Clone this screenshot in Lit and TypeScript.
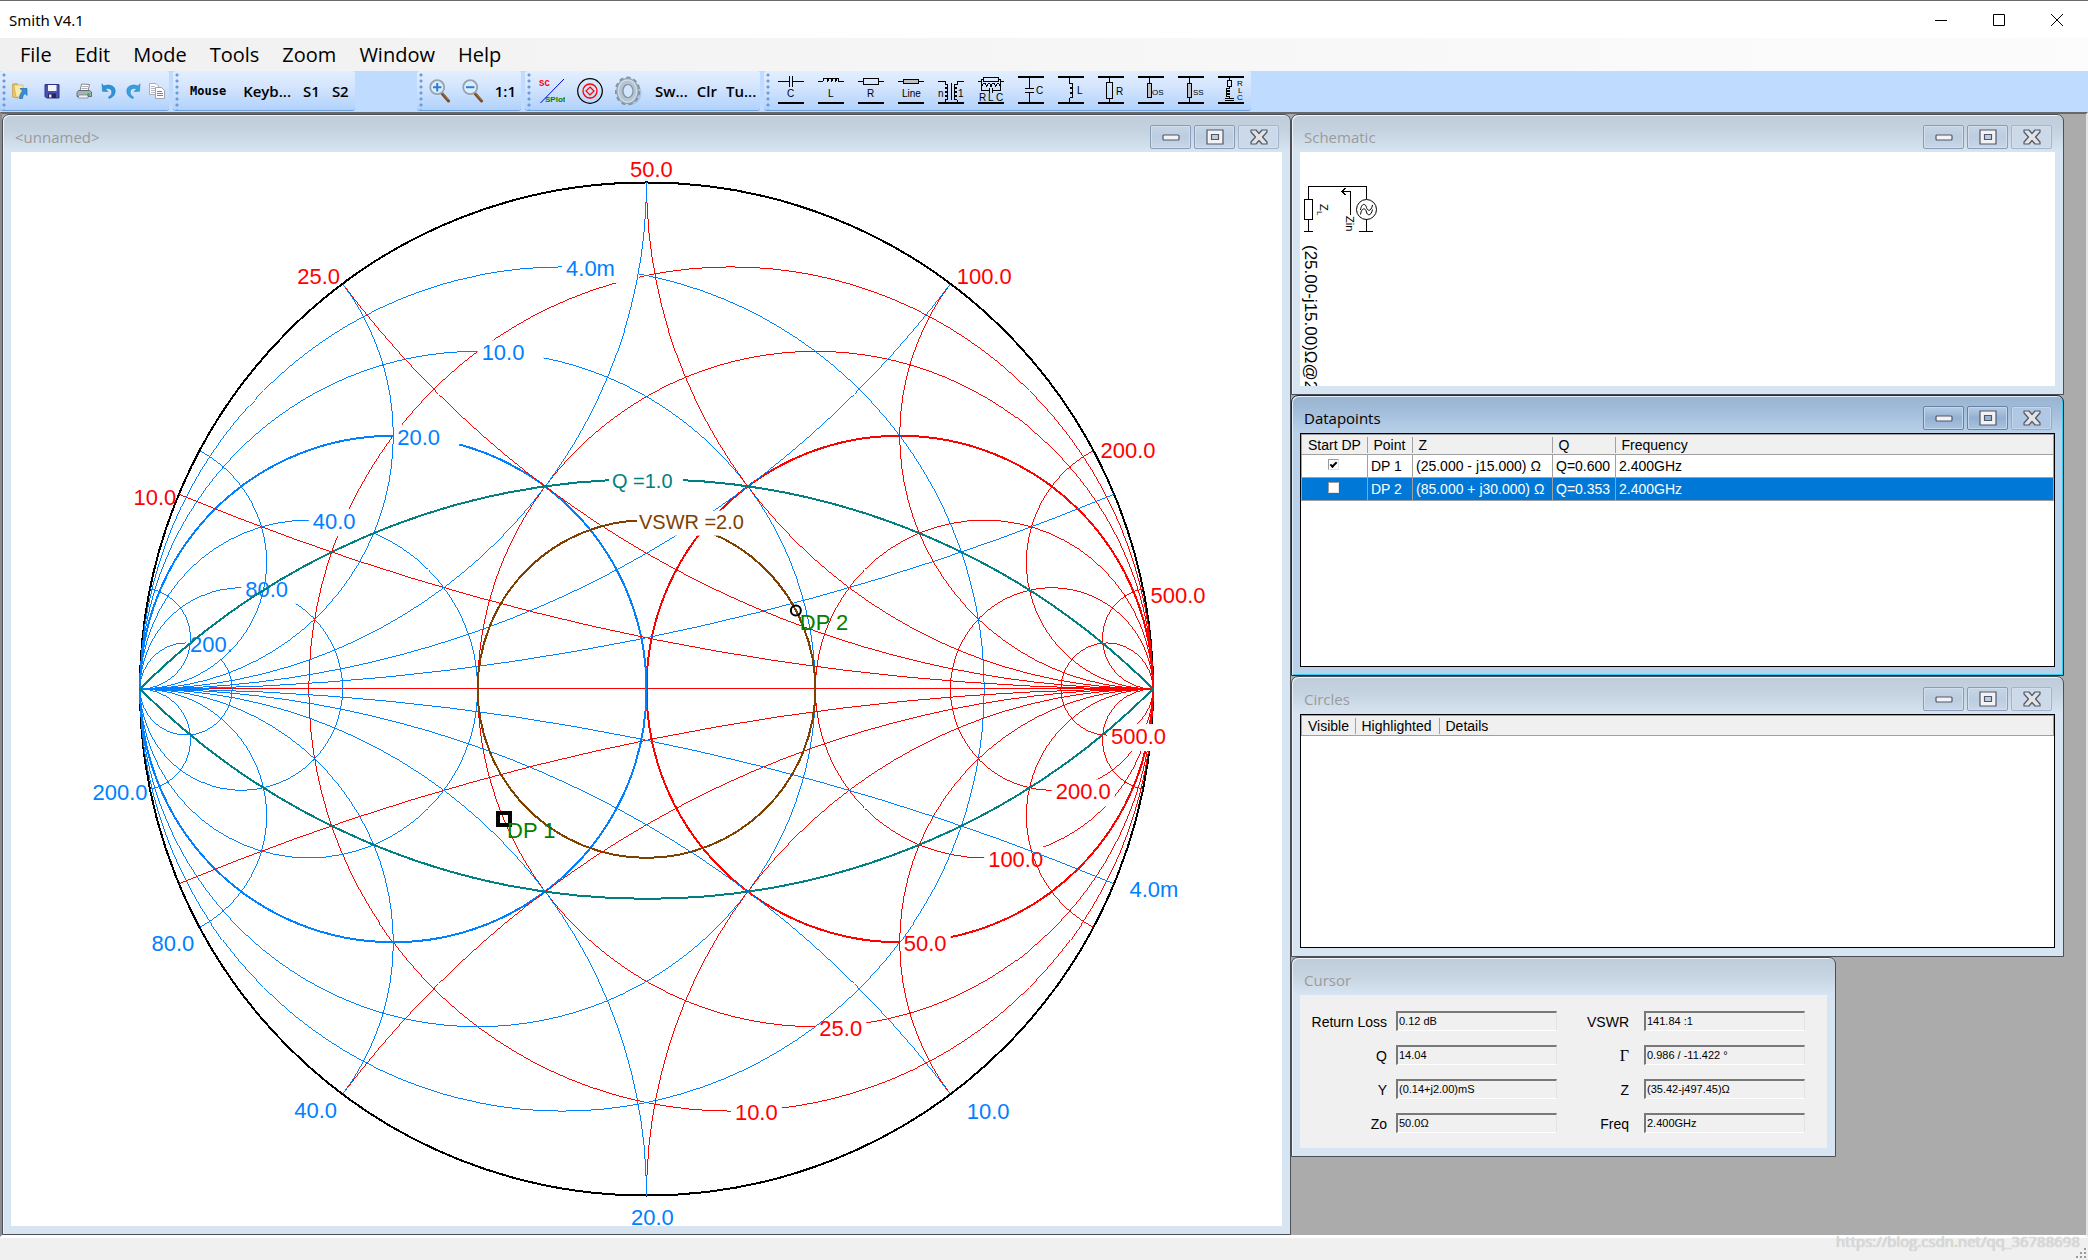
import { LitElement, html, svg, css, type TemplateResult, type SVGTemplateResult } from "lit";
import { customElement, property } from "lit/decorators.js";

const RED = "#ff0000";
const BLUE = "#0080ff";

/* Chart geometry, in chart units */
const CX = 646.5;
const CY = 689.5;
const R = 507;

/* Toolbar pictures ------------------------------------------------------- */

const bars = svg`<path class="bar" d="M0 27H26"/>`;
const rails = svg`<path class="bar" d="M0 1H26M0 27H26"/>`;

const parts: { name: string; art: SVGTemplateResult }[] = [
  { name: "Series capacitor", art: svg`<path d="M0 5.500H11.500M11.500 0V11M14.500 0V11M14.500 5.500H26"/><text x="9" y="21">C</text>${bars}` },
  { name: "Series inductor", art: svg`<path d="M0 5.500H5C5 1 10 1 10 5.500C10 1 14 1 14 5.500C14 1 18 1 18 5.500C18 1 21 1 21 5.500H26"/><text x="10" y="21">L</text>${bars}` },
  { name: "Series resistor", art: svg`<path d="M0 5.500H5.500M20.500 5.500H26M5.500 2.500H20.500V8.500H5.500Z"/><text x="9" y="21">R</text>${bars}` },
  { name: "Series line", art: svg`<path d="M0 5.500H26"/><path class="grey" d="M5.500 3.500H20.500V7.500H5.500Z"/><text x="4" y="21">Line</text>${bars}` },
  { name: "Transformer", art: svg`<path d="M0 5.500H7V8C11 8 11 12 7 12C11 12 11 16 7 16C11 16 11 20 7 20C11 20 11 24 7 24V27M26 5.500H19V8C15 8 15 12 19 12C15 12 15 16 19 16C15 16 15 20 19 20C15 20 15 24 19 24V27M13.500 7V24"/><text x="0" y="21">n</text><text x="20" y="21">1</text>${bars}` },
  { name: "Series RLC", art: svg`<path d="M0 5.500H3.500M22.500 5.500H26M5.500 1.500H20.500V5.500H5.500ZM5.500 3.500H3.500V14.500H11.500M20.500 3.500H22.500V14.500H14.500M3.500 11C5 6 8 6 8.500 11C10 6 12 6 13 11C14 6 17 6 17.500 11C19 6 21 6 22.500 11M11.500 12V17M14.500 12V17"/><text x="1" y="25">R</text><text x="10" y="25">L</text><text x="18" y="25">C</text>${bars}` },
  { name: "Shunt capacitor", art: svg`<path d="M11.500 2V12.500M7 12.500H16M7 16.500H16M11.500 16.500V27"/><text x="18" y="18">C</text>${rails}` },
  { name: "Shunt inductor", art: svg`<path d="M11.500 2V7C16 7 16 12 11.500 12C16 12 16 17 11.500 17C16 17 16 22 11.500 22V27"/><text x="19" y="18">L</text>${rails}` },
  { name: "Shunt resistor", art: svg`<path d="M11.500 2V6M11.500 22V27M8.500 6.500H14.500V22.500H8.500Z"/><text x="18" y="19">R</text>${rails}` },
  { name: "Open stub", art: svg`<path d="M11.500 2V7"/><path class="grey" d="M9.500 7.500H13.500V21.500H9.500Z"/><text class="tight" x="14" y="19">OS</text>${rails}` },
  { name: "Shorted stub", art: svg`<path d="M11.500 2V27"/><path class="grey" d="M9.500 7.500H13.500V21.500H9.500Z"/><text class="tight" x="15" y="19">SS</text>${rails}` },
  { name: "Shunt RLC", art: svg`<path d="M11.500 2V4M9.500 4.500H13.500V10.500H9.500ZM11.500 10.500V12C7 12 7 15 11.500 15C7 15 7 18 11.500 18C7 18 7 21 11.500 21V22M7 22.500H16M7 24.500H16"/><text class="tight" x="19" y="10">R</text><text class="tight" x="20" y="17">L</text><text class="tight" x="19" y="24">C</text>${rails}` },
];

const openIcon = html`<svg width="16" height="16" viewBox="0 0 16 16"><path fill="#e9c56a" stroke="#b8923a" stroke-width=".6" d="M.5 1L5 .5 6 2V15L.500 14Z"/><path fill="#fbe9a8" stroke="#c9a64c" stroke-width=".6" d="M2 2H11V14H4Z"/><path fill="#2f8fe0" stroke="#1560a8" stroke-width=".6" d="M8 5.500H15V12.500L13 10.500C11 12 10.500 13.500 10.500 15.500L7.500 15.500C7.500 12.500 8.500 10 10.500 8Z"/></svg>`;
const saveIcon = html`<svg width="16" height="16" viewBox="0 0 16 16"><path fill="#4a4fb5" stroke="#30357f" d="M1 1.500H15V15H2.500L1 13.500Z"/><path fill="#f2f4fb" d="M4 2H12.500V8H4Z"/><path fill="#25285e" d="M4 10.500H12V15H4Z"/><path fill="#dfe3f4" d="M5 11.500H7.500V14.500H5Z"/></svg>`;
const printIcon = html`<svg width="16" height="16" viewBox="0 0 16 16"><path fill="#fdfdfd" stroke="#6a6f76" stroke-width=".8" d="M5.500 1L13.500 1.500 12 8H4Z"/><path fill="#a9b0b8" stroke="#4d545c" stroke-width=".8" d="M2.500 7.500H13.500L15.500 9V13.500H1V9.500Z"/><path fill="#eef0f2" stroke="#666d75" stroke-width=".6" d="M3 12H12V15H2Z"/><path stroke="#8a8f96" stroke-width=".7" d="M6 3.500H12M5.500 5.500H11.500"/><circle cx="12.500" cy="11.500" r="1.500" fill="#18c42a"/></svg>`;
const undoIcon = html`<svg width="16" height="16" viewBox="0 0 16 16"><path fill="#2c94d8" stroke="#1a6fae" stroke-width=".5" d="M1 .8L2.700 3C8 .8 14.500 2.500 14.200 8.500C14 12.300 11.500 14.500 8 15.500L7.500 14C10 12.700 11 11 10.800 8.800C10.500 5.500 7.500 4.800 4.500 5.800L6.800 8.500L1.500 8.300Z"/></svg>`;
const redoIcon = html`<svg width="16" height="16" viewBox="0 0 16 16"><path fill="#3aa0dd" stroke="#1f7ab8" stroke-width=".5" d="M15 .8L13.300 3C8 .8 1.500 2.500 1.800 8.500C2 12.300 4.500 14.500 8 15.500L8.500 14C6 12.700 5 11 5.200 8.800C5.500 5.500 8.500 4.800 11.500 5.800L9.200 8.500L14.500 8.300Z"/></svg>`;
const copyIcon = html`<svg width="16" height="16" viewBox="0 0 16 16"><path fill="#fff" stroke="#999da3" stroke-width=".8" d="M.5.500H7L9.500 3V11.500H.500Z"/><path stroke="#b3b8c0" d="M2 3.500H6M2 5.500H7M2 7.500H6M2 9.500H6"/><path fill="#fff" stroke="#8a9098" stroke-width=".8" d="M6.500 4.500H12.500L15.500 7.500V15.500H6.500Z"/><path stroke="#5f87bd" d="M8 8.500H13M8 10.500H14M8 12.500H14"/></svg>`;
const lens = (sign: string) => html`<svg width="22" height="24" viewBox="0 0 22 24"><path stroke="#7a4b24" stroke-width="3" stroke-linecap="round" d="M13 14.500L19.500 22"/><path stroke="#a87748" stroke-width="1" d="M13.500 14L19.500 21"/><circle cx="8.200" cy="8.200" r="7" fill="#dcecfb" stroke="#93a3b5" stroke-width="1.800"/><path stroke="#2b7fd6" stroke-width="2" d=${sign}/></svg>`;
const splotIcon = html`<svg width="26" height="26" viewBox="0 0 26 26"><path stroke="#0000e0" stroke-width="1" d="M1.500 25L25 1"/><text class="mono-red" x="0" y="8">SC</text><text class="mono-green" x="6" y="24">SPlot</text></svg>`;
const targetIcon = html`<svg width="26" height="26" viewBox="0 0 26 26"><circle cx="13" cy="13" r="12.300" fill="none" stroke="#000" stroke-width="1.200"/><circle cx="13" cy="13" r="7" fill="none" stroke="#f00" stroke-width="1.300"/><path fill="none" stroke="#f00" stroke-width="1.200" d="M13 9L17 13 13 17 9 13Z"/></svg>`;
const gearIcon = html`<svg width="28" height="30" viewBox="0 0 28 30"><ellipse cx="16" cy="17" rx="10.500" ry="11.500" fill="#8ba3c2" opacity=".4"/><ellipse cx="12.500" cy="15" rx="11" ry="12.700" fill="none" stroke="#8396a8" stroke-width="3.500" stroke-dasharray="4 2.800"/><ellipse cx="12.500" cy="15" rx="7.700" ry="9.500" fill="none" stroke="#8ea1b2" stroke-width="7"/><ellipse cx="12.500" cy="15" rx="7.700" ry="9.500" fill="none" stroke="#b5c4d0" stroke-width="5"/><ellipse cx="12.500" cy="15" rx="9.200" ry="11" fill="none" stroke="#d6e0e8" stroke-width="1.200"/><ellipse cx="13" cy="15" rx="5" ry="6.500" fill="#d4e5fb" stroke="#7f93a6" stroke-width="1.200"/></svg>`;

/* MDI child window -------------------------------------------------------- */

@customElement("mdi-window")
export class MdiWindow extends LitElement {
  @property() heading = "";
  @property({ type: Boolean, reflect: true }) active = false;
  @property({ type: Boolean }) plain = false;

  static styles = css`
    :host {
      display: flex;
      flex-direction: column;
      box-sizing: border-box;
      min-width: 0;
      min-height: 0;
      border: 1px solid #4b5058;
      border-radius: 7px 7px 0 0;
      padding: 0 8px 8px;
      background: linear-gradient(#bfcddb 0, #c5d2e0 16px, #d7e4f2 37px);
      box-shadow: inset 1px 1px 0 #eef4fa;
      font: 15px/20px "Open Sans", "Noto Sans", sans-serif;
      color: #9b9b9b;
    }
    :host([active]) {
      border-color: #1b2a38;
      background: linear-gradient(#99b4d1 0, #a3bddb 16px, #b9d1ea 37px);
      box-shadow: inset 1px 1px 0 #e4f0fb, inset -1px -1px 0 #2fd0f0;
      color: #000;
    }
    .head {
      display: flex;
      flex: none;
      align-items: center;
      height: 37px;
      gap: 3px;
      padding: 0 3px 0 4px;
      box-sizing: border-box;
    }
    .title {
      flex: 1;
      margin: 0;
      font: inherit;
      padding-top: 6px;
    }
    button {
      box-sizing: border-box;
      width: 41px;
      height: 24px;
      margin-top: 7px;
      padding: 0;
      border: 1px solid #8b9cb8;
      border-radius: 2px;
      background: linear-gradient(#c6d5e6, #bccde0 50%, #c8d7e8);
      box-shadow: inset 0 0 0 1px #d3dfec;
      display: flex;
      align-items: center;
      justify-content: center;
    }
    button.close {
      border-color: #a3b4cc;
      background: #cbd9e9;
    }
    :host([active]) button {
      border-color: #6880a2;
      background: linear-gradient(#b6cce6, #94b0d0 50%, #a9c4e2);
      box-shadow: inset 0 0 0 1px #c3d6ec;
    }
    :host([active]) button.close {
      border-color: #93abcd;
      background: #b0c8e4;
    }
    .body {
      flex: 1;
      min-height: 0;
      display: flex;
      flex-direction: column;
      background: #fff;
    }
    .plain {
      background: #f0f0f0;
    }
  `;

  render() {
    return html`
      <div class="head">
        <h2 class="title">${this.heading}</h2>
        ${this.plain
          ? ""
          : html`
              <button aria-label="Minimize"><svg width="18" height="7" viewBox="0 0 18 7"><rect x="1" y="1" width="16" height="5" rx="1" fill="#f3f3f3" stroke="#50566b" stroke-width="1.200"/></svg></button>
              <button aria-label="Maximize"><svg width="18" height="16" viewBox="0 0 18 16"><path fill="#f3f3f3" stroke="#50566b" stroke-width="1.200" fill-rule="evenodd" d="M1 1H17V15H1ZM5.500 5.500H12.500V10.500H5.500Z"/></svg></button>
              <button class="close" aria-label="Close"><svg width="18" height="16" viewBox="0 0 18 16"><path fill="#e3e3e3" stroke="#50566b" stroke-width="1.200" stroke-linejoin="round" d="M1 1H6L9 4.500 12 1H17V3L12.500 8 17 13V15H12L9 11.500 6 15H1V13L5.500 8 1 3Z"/></svg></button>
            `}
      </div>
      <div class="body ${this.plain ? "plain" : ""}"><slot></slot></div>
    `;
  }
}

/* Smith chart ------------------------------------------------------------- */

@customElement("smith-chart")
export class SmithChart extends LitElement {
  static styles = css`
    :host {
      display: flex;
      flex: 1;
      min-height: 0;
    }
    svg {
      width: 100%;
      height: 100%;
      overflow: visible;
      font-family: "Liberation Sans", Arial, sans-serif;
      font-size: 22px;
    }
    .line {
      fill: none;
      stroke-width: 1;
      shape-rendering: crispEdges;
    }
    .bold {
      stroke-width: 2;
    }
    .small {
      font-size: 20px;
    }
    .mark {
      fill: #008000;
    }
  `;

  private values = [0.2, 0.5, 1, 2, 4, 10];

  private circle(r: number, mirror: boolean, label: string) {
    const side = mirror ? -1 : 1;
    const cx = CX + (side * R * r) / (1 + r);
    const rad = R / (1 + r);
    const edge = CY + side * rad;
    const color = mirror ? BLUE : RED;
    const width = mirror ? (label === "4.0m" ? 77 : 66) : label.length > 4 ? 63 : 51;
    return svg`
      <circle class="line ${r === 1 ? "bold" : ""}" cx=${cx} cy=${CY} r=${rad} stroke=${color}/>
      <rect x=${cx} y=${edge - 11} width=${width} height="27" fill="#fff"/>
      <text x=${cx + 4} y=${edge + 9} fill=${color}>${label}</text>`;
  }

  private arcs(x: number, mirror: boolean) {
    const side = mirror ? -1 : 1;
    const m = 1 + x * x;
    const gx = (side * R * (x * x - 1)) / m;
    const gy = (R * 2 * x) / m;
    const ex = CX + side * R;
    const rad = R / x;
    const up = mirror ? 1 : 0;
    return svg`
      <path class="line" stroke=${mirror ? BLUE : RED} d="M${CX + gx} ${CY - gy}A${rad} ${rad} 0 0 ${up} ${ex} ${CY}M${CX + gx} ${CY + gy}A${rad} ${rad} 0 0 ${1 - up} ${ex} ${CY}"/>`;
  }

  render() {
    const red = ["10.0", "25.0", "50.0", "100.0", "200.0", "500.0"];
    const blue = ["4.0m", "10.0", "20.0", "40.0", "80.0", "200."];
    const redRim: [number, number, string][] = [[133, 505, "10.0"], [297, 284, "25.0"], [630, 177, "50.0"], [957, 284, "100.0"], [1101, 458, "200.0"], [1151, 603, "500.0"]];
    const blueRim: [number, number, string][] = [[92, 801, "200.0"], [151, 952, "80.0"], [294, 1119, "40.0"], [631, 1226, "20.0"], [967, 1120, "10.0"], [1130, 898, "4.0m"]];
    const q = R * Math.SQRT2;
    return html`
      <svg viewBox="11 152 1271 1075" role="img" aria-label="Smith chart">
        <circle class="line bold" cx=${CX} cy=${CY} r=${R} stroke="#000"/>
        <path class="line" stroke=${RED} d="M${CX - R} ${CY}H${CX + R}"/>
        ${this.values.map((v, i) => this.circle(v, false, red[i]))}
        ${this.values.map((v, i) => this.circle(v, true, blue[i]))}
        ${this.values.map((v) => this.arcs(v, false))}
        ${this.values.map((v) => this.arcs(v, true))}
        ${redRim.map(([x, y, t]) => svg`<text x=${x} y=${y} fill=${RED}>${t}</text>`)}
        ${blueRim.map(([x, y, t]) => svg`<text x=${x} y=${y} fill=${BLUE}>${t}</text>`)}
        <path class="line bold" stroke="#008080" d="M${CX - R} ${CY}A${q} ${q} 0 0 1 ${CX + R} ${CY}A${q} ${q} 0 0 1 ${CX - R} ${CY}"/>
        <rect x="609" y="470" width="74" height="24" fill="#fff"/>
        <text class="small" x="612" y="488" fill="#008080">Q =1.0</text>
        <circle class="line bold" cx=${CX} cy=${CY} r=${R / 3} stroke="#804000"/>
        <rect x="637" y="511" width="110" height="25" fill="#fff"/>
        <text class="small" x="639" y="529" fill="#804000">VSWR =2.0</text>
        <path fill="none" stroke="#000" stroke-width="4" shape-rendering="crispEdges" d="M498 814H510V826H498Z"/>
        <text class="mark" x="507" y="839">DP 1</text>
        <circle cx="796" cy="611" r="5" fill="none" stroke="#000" stroke-width="2"/>
        <text class="mark" x="800" y="630">DP 2</text>
      </svg>
    `;
  }
}

/* Application ------------------------------------------------------------- */

@customElement("app-root")
export class AppRoot extends LitElement {
  static styles = css`
    :host {
      display: flex;
      flex-direction: column;
      position: relative;
      box-sizing: border-box;
      height: 100vh;
      border-top: 1px solid #6a6a6a;
      background: #fff;
      color: #000;
      font-family: "Open Sans", "Noto Sans", sans-serif;
    }
    button {
      margin: 0;
      padding: 0;
      border: 0;
      background: none;
      font: inherit;
      color: inherit;
      white-space: nowrap;
    }
    .titlebar {
      display: flex;
      align-items: center;
      height: 37px;
      padding: 0 2px 0 9px;
    }
    .titlebar h1 {
      flex: 1;
      margin: 0;
      font: 400 15px/20px "Noto Sans", sans-serif;
    }
    .titlebar button {
      width: 58px;
      height: 36px;
    }
    .titlebar svg {
      display: block;
      margin: 0 auto;
    }
    .menu {
      display: flex;
      align-items: center;
      height: 33px;
      gap: 23px;
      padding-left: 20px;
      font-size: 20px;
      line-height: 32px;
      background: linear-gradient(90deg, #f0f0f0, #fcfcfc);
    }
    .tools {
      display: flex;
      height: 41px;
      gap: 4px;
      background: #bfdbff;
      font-size: 15px;
      font-weight: 600;
    }
    .strip {
      display: flex;
      align-items: center;
      box-sizing: border-box;
      height: 40px;
      padding: 0 4px 0 12px;
      border-radius: 3px;
      border-bottom: 1px solid #6f9fd9;
      background:
        radial-gradient(circle at 2px 2px, #6d9ad4 1px, transparent 2px) 2px 2px / 4px 6px repeat-y,
        linear-gradient(#e3efff, #d4e5fd 40%, #b1d2fc);
    }
    .files { gap: 8px; }
    .wide { display: flex; gap: 16px; margin-right: 1px; }
    .modes { gap: 12px; padding: 0 6px 0 17px; }
    .spacer { width: 54px; }
    .views { gap: 11px; padding-right: 5px; }
    .plots { gap: 12px; padding-left: 14px; }
    .words { display: flex; gap: 9px; }
    .parts { gap: 14px; padding: 0 7px 0 14px; }
    .mouse {
      font: bold 12px "DejaVu Sans Mono", monospace;
      padding-right: 5px;
    }
    .strip svg { display: block; fill: none; }
    .part {
      shape-rendering: crispEdges;
      stroke: #000;
      stroke-width: 1;
    }
    .part text {
      fill: #000;
      stroke: none;
      font: 10px "Liberation Sans", Arial, sans-serif;
    }
    .part .tight { font-size: 8px; }
    .bar { stroke-width: 2; }
    .grey { fill: #c0c0c0; }
    .mono-red { font: bold 9px "Liberation Mono", monospace; fill: #f00; }
    .mono-green { font: bold 8px "Liberation Sans", sans-serif; fill: #008000; }

    .desktop {
      flex: 1;
      min-height: 0;
      display: grid;
      grid-template-columns: 1289fr 773fr 22fr;
      border: 2px solid #696969;
      border-left-color: #8c8c8c;
      border-right-color: #e3e3e3;
      border-bottom-color: #fff;
      background: #ababab;
    }
    .side {
      display: grid;
      min-width: 0;
      min-height: 0;
      grid-template-rows: 281fr 281fr 281fr 278fr;
    }
    .cursor {
      align-self: start;
      justify-self: start;
    }
    .schematic {
      display: block;
      flex: none;
      font-family: "Liberation Sans", Arial, sans-serif;
    }
    .list {
      flex: 1;
      border: 1px solid #000;
    }
    table {
      width: 100%;
      border-collapse: collapse;
      table-layout: fixed;
      border: 1px solid #a0a0a0;
      font: 14px/16px "Liberation Sans", Arial, sans-serif;
      color: #000;
    }
    th, td {
      box-sizing: border-box;
      padding: 0 3px;
      text-align: left;
      font-weight: 400;
      white-space: nowrap;
    }
    th {
      height: 20px;
      padding-left: 6px;
      background: linear-gradient(#a0a0a0, #a0a0a0) right center / 1px 16px no-repeat #f0f0f0;
    }
    th:last-child { background: #f0f0f0; }
    thead { border-bottom: 1px solid #a0a0a0; }
    td {
      height: 23px;
      border-right: 1px solid #a0a0a0;
      border-bottom: 1px solid #a0a0a0;
    }
    td.check { text-align: center; line-height: 0; }
    tr.selected { background: #0078d7; color: #fff; }
    .start { width: 66px; }
    .point { width: 45px; }
    .z { width: 140px; }
    .q { width: 63px; }
    .visible { width: 54px; }
    .lit { width: 84px; }
    input[type="checkbox"] {
      appearance: none;
      box-sizing: border-box;
      width: 11px;
      height: 11px;
      margin: 0 2px 4px 0;
      border: 1px solid #9a9a9a;
      border-right-color: #e3e3e3;
      border-bottom-color: #e3e3e3;
      background: #fff;
    }
    input[type="checkbox"]:checked::before {
      content: "";
      display: block;
      box-sizing: border-box;
      width: 7px;
      height: 4px;
      margin: 2px 1px;
      border: solid #000;
      border-width: 0 0 2px 2px;
      transform: rotate(-45deg);
    }
    .readout {
      display: grid;
      grid-template-columns: 83px 161px 77px 161px;
      gap: 14px 5px;
      padding: 16px 22px 15px 8px;
      font: 14px/20px "Liberation Sans", Arial, sans-serif;
      color: #000;
    }
    .readout label {
      text-align: right;
      padding: 1px 4px 0 0;
      height: 19px;
      white-space: nowrap;
    }
    .readout label.right { padding-right: 10px; }
    .readout label.greek {
      font-family: "Liberation Serif", serif;
      font-size: 16px;
    }
    .readout input {
      box-sizing: border-box;
      width: 100%;
      height: 20px;
      padding: 0 0 2px 1px;
      border: 2px solid #a0a0a0;
      border-top-color: #787878;
      border-left-color: #787878;
      border-right: 1px solid #e3e3e3;
      border-bottom: 1px solid #fff;
      background: #f0f0f0;
      font: 11px "Liberation Sans", Arial, sans-serif;
      color: #000;
    }
    .status {
      height: 22px;
      flex: none;
      border-top: 1px solid #fff;
      background: #f0f0f0;
      display: flex;
      align-items: flex-end;
      justify-content: flex-end;
    }
    .watermark {
      position: absolute;
      right: 8px;
      bottom: 8px;
      font: 15px/22px "Open Sans", sans-serif;
      color: #dedede;
      text-shadow: 0 0 1px #a6a6a6;
    }
  `;

  private labelled(name: string, art: TemplateResult) {
    return html`<button aria-label=${name}>${art}</button>`;
  }

  private field(id: string, label: string, value: string, kind = "") {
    return html`<label class=${kind} for=${id}>${label}</label><input id=${id} readonly .value=${value} />`;
  }

  private schematic() {
    return html`
      <svg class="schematic" width="100" height="234" viewBox="1300 152 100 234" fill="none" stroke="#000">
        <g shape-rendering="crispEdges">
          <path d="M1308.500 199V186.500H1366.500V199M1304.500 199.500H1312.500V219.500H1304.500ZM1308.500 219V231.500M1304 231.500H1313M1366.500 219V231.500M1359 231.500H1373"/>
          <path d="M1350.500 215V191.500H1342M1345.500 188L1342 191.500L1345.500 195"/>
        </g>
        <circle cx="1366.500" cy="209.500" r="10"/>
        <path d="M1360.500 210C1361.500 203 1365.500 203 1366.500 207.500S1371.500 211 1372.500 205M1360.500 214.500C1361.500 207.500 1365.500 207.500 1366.500 212S1371.500 215.500 1372.500 209.500"/>
        <g fill="#000" stroke="none">
          <text font-size="11" transform="translate(1320 204) rotate(90)">Z</text>
          <text font-size="8" transform="translate(1317 211) rotate(90)">L</text>
          <text font-size="11" transform="translate(1346 216) rotate(90)">Zin</text>
          <text font-size="17" transform="translate(1305 245) rotate(90)">(25.00-j15.00)Ω@2</text>
        </g>
      </svg>`;
  }

  render() {
    return html`
      <header class="titlebar">
        <h1>Smith V4.1</h1>
        <button aria-label="Minimize"><svg width="12" height="12"><path stroke="#000" d="M0 6.500H12"/></svg></button>
        <button aria-label="Maximize"><svg width="12" height="12"><path fill="none" stroke="#000" d="M.5.500H11.500V11.500H.500Z"/></svg></button>
        <button aria-label="Close"><svg width="12" height="12"><path stroke="#000" d="M0 0L12 12M12 0L0 12"/></svg></button>
      </header>
      <nav class="menu">
        ${["File", "Edit", "Mode", "Tools", "Zoom", "Window", "Help"].map((m) => html`<button>${m}</button>`)}
      </nav>
      <div class="tools" role="toolbar">
        <div class="strip files">
          <div class="wide">${this.labelled("Open", openIcon)}${this.labelled("Save", saveIcon)}${this.labelled("Print", printIcon)}</div>
          ${this.labelled("Undo", undoIcon)}${this.labelled("Redo", redoIcon)}${this.labelled("Copy", copyIcon)}
        </div>
        <div class="strip modes">
          <button class="mouse">Mouse</button>
          <button>Keyb...</button>
          <button>S1</button>
          <button>S2</button>
        </div>
        <div class="spacer"></div>
        <div class="strip views">
          ${this.labelled("Zoom in", lens("M4 8.200H12.400M8.200 4V12.400"))}
          ${this.labelled("Zoom out", lens("M4 8.200H12.400"))}
          <button>1:1</button>
        </div>
        <div class="strip plots">
          ${this.labelled("S-plot", splotIcon)}
          ${this.labelled("Circles", targetIcon)}
          ${this.labelled("Settings", gearIcon)}
          <div class="words">
            <button>Sw...</button>
            <button>Clr</button>
            <button>Tu...</button>
          </div>
        </div>
        <div class="strip parts">
          ${parts.map((p) => html`<button aria-label=${p.name}><svg class="part" width="26" height="29" viewBox="0 0 26 29">${p.art}</svg></button>`)}
        </div>
      </div>
      <main class="desktop">
        <mdi-window heading="&lt;unnamed&gt;"><smith-chart></smith-chart></mdi-window>
        <div class="side">
          <mdi-window heading="Schematic">${this.schematic()}</mdi-window>
          <mdi-window heading="Datapoints" active>
            <div class="list">
              <table>
                <thead>
                  <tr><th class="start">Start DP</th><th class="point">Point</th><th class="z">Z</th><th class="q">Q</th><th>Frequency</th></tr>
                </thead>
                <tbody>
                  <tr><td class="check"><input type="checkbox" aria-label="Start at DP 1" checked /></td><td>DP 1</td><td>(25.000 - j15.000) Ω</td><td>Q=0.600</td><td>2.400GHz</td></tr>
                  <tr class="selected"><td class="check"><input type="checkbox" aria-label="Start at DP 2" /></td><td>DP 2</td><td>(85.000 + j30.000) Ω</td><td>Q=0.353</td><td>2.400GHz</td></tr>
                </tbody>
              </table>
            </div>
          </mdi-window>
          <mdi-window heading="Circles">
            <div class="list">
              <table>
                <thead>
                  <tr><th class="visible">Visible</th><th class="lit">Highlighted</th><th>Details</th></tr>
                </thead>
              </table>
            </div>
          </mdi-window>
          <mdi-window class="cursor" heading="Cursor" plain>
            <div class="readout">
              ${this.field("loss", "Return Loss", "0.12 dB")}${this.field("vswr", "VSWR", "141.84 :1", "right")}
              ${this.field("q", "Q", "14.04")}${this.field("gamma", "Γ", "0.986 / -11.422 °", "right greek")}
              ${this.field("y", "Y", "(0.14+j2.00)mS")}${this.field("z", "Z", "(35.42-j497.45)Ω", "right")}
              ${this.field("zo", "Zo", "50.0Ω")}${this.field("freq", "Freq", "2.400GHz", "right")}
            </div>
          </mdi-window>
        </div>
      </main>
      <footer class="status">
        <svg width="12" height="12" fill="#9a9a9a"><path d="M8 0h2v2h-2zM4 4h2v2h-2zM8 4h2v2h-2zM0 8h2v2h-2zM4 8h2v2h-2zM8 8h2v2h-2z"/></svg>
      </footer>
      <span class="watermark">https://blog.csdn.net/qq_36788698</span>
    `;
  }
}
